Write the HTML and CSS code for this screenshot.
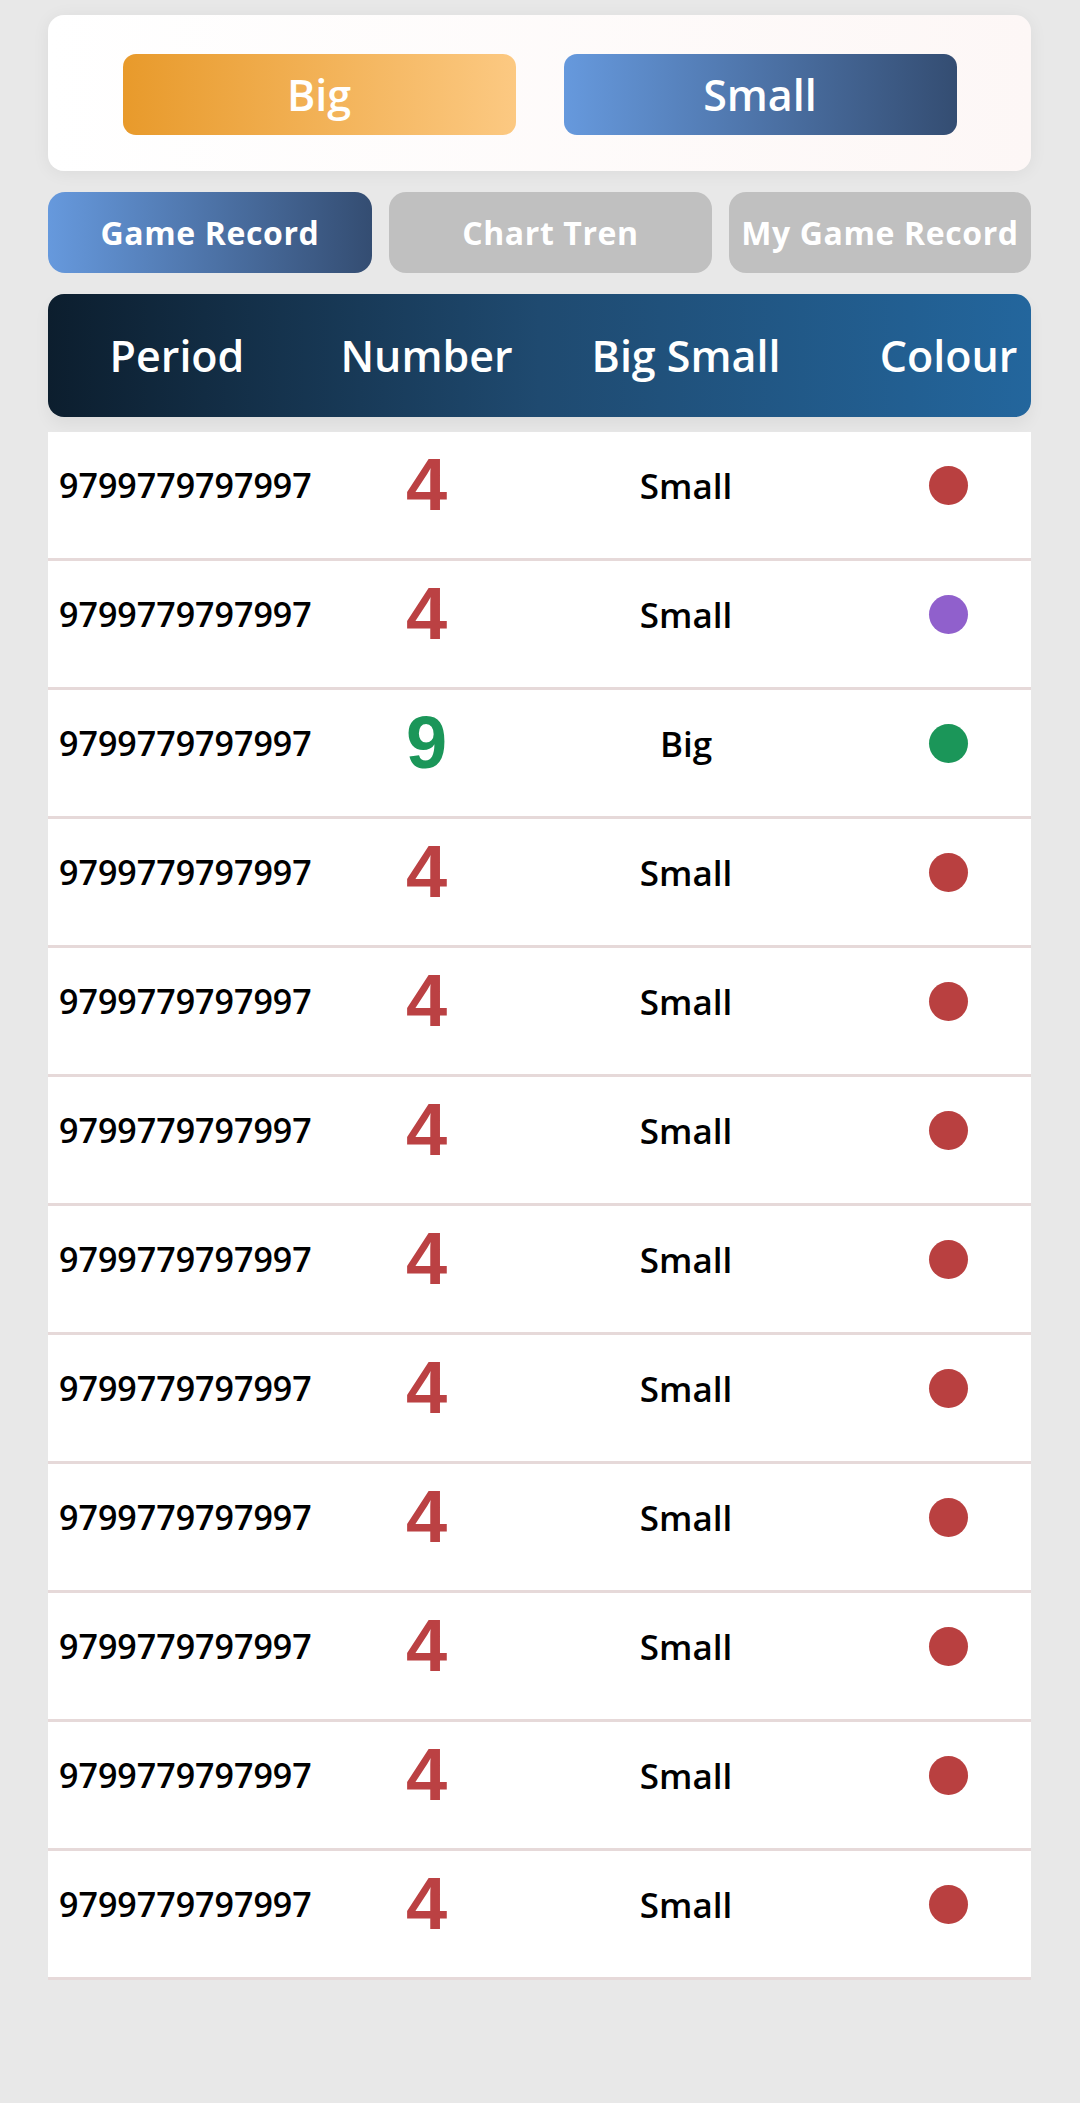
FILE: index.html
```html
<!DOCTYPE html>
<html lang="en">
<head>
<meta charset="utf-8">
<title>Game Record</title>
<link rel="stylesheet" href="styles.css">
</head>
<body>
<div class="page">
  <section class="choice-card">
    <button class="choice big">Big</button>
    <button class="choice small">Small</button>
  </section>

  <nav class="tabs">
    <div class="tab active">Game Record</div>
    <div class="tab">Chart Tren</div>
    <div class="tab">My Game Record</div>
  </nav>

  <div class="table-head">
    <div class="th th-period">Period</div>
    <div class="th">Number</div>
    <div class="th">Big Small</div>
    <div class="th th-colour">Colour</div>
  </div>

  <div class="rows">
    <div class="row"><div class="period">9799779797997</div><div class="num red">4</div><div class="size">Small</div><div class="col-dot"><span class="dot dot-red"></span></div></div>
    <div class="row"><div class="period">9799779797997</div><div class="num red">4</div><div class="size">Small</div><div class="col-dot"><span class="dot dot-purple"></span></div></div>
    <div class="row"><div class="period">9799779797997</div><div class="num green">9</div><div class="size">Big</div><div class="col-dot"><span class="dot dot-green"></span></div></div>
    <div class="row"><div class="period">9799779797997</div><div class="num red">4</div><div class="size">Small</div><div class="col-dot"><span class="dot dot-red"></span></div></div>
    <div class="row"><div class="period">9799779797997</div><div class="num red">4</div><div class="size">Small</div><div class="col-dot"><span class="dot dot-red"></span></div></div>
    <div class="row"><div class="period">9799779797997</div><div class="num red">4</div><div class="size">Small</div><div class="col-dot"><span class="dot dot-red"></span></div></div>
    <div class="row"><div class="period">9799779797997</div><div class="num red">4</div><div class="size">Small</div><div class="col-dot"><span class="dot dot-red"></span></div></div>
    <div class="row"><div class="period">9799779797997</div><div class="num red">4</div><div class="size">Small</div><div class="col-dot"><span class="dot dot-red"></span></div></div>
    <div class="row"><div class="period">9799779797997</div><div class="num red">4</div><div class="size">Small</div><div class="col-dot"><span class="dot dot-red"></span></div></div>
    <div class="row"><div class="period">9799779797997</div><div class="num red">4</div><div class="size">Small</div><div class="col-dot"><span class="dot dot-red"></span></div></div>
    <div class="row"><div class="period">9799779797997</div><div class="num red">4</div><div class="size">Small</div><div class="col-dot"><span class="dot dot-red"></span></div></div>
    <div class="row"><div class="period">9799779797997</div><div class="num red">4</div><div class="size">Small</div><div class="col-dot"><span class="dot dot-red"></span></div></div>
  </div>
</div>
</body>
</html>
```

FILE: styles.css
```css
* { box-sizing: border-box; }

html, body {
  margin: 0;
  padding: 0;
  background: #e8e8e8;
}

body {
  font-family: "Open Sans", "DejaVu Sans", sans-serif;
  font-weight: 600;
  color: #000;
}

.page {
  width: 983px;
  margin-left: 48px;
  padding-top: 15px;
  padding-bottom: 60px;
}

.choice-card {
  height: 156px;
  border-radius: 16px;
  background: linear-gradient(to right, #ffffff, #fdf7f6);
  box-shadow: 0 2px 18px rgba(0, 0, 0, 0.06);
  display: flex;
  justify-content: center;
  gap: 48px;
  padding-top: 39px;
}

.choice {
  width: 393px;
  height: 81px;
  border: none;
  border-radius: 13px;
  color: #fff;
  font-family: "Open Sans", "DejaVu Sans", sans-serif;
  font-weight: 600;
  font-size: 43px;
  line-height: 81px;
  padding: 0;
}

.choice.big { background: linear-gradient(to right, #e89a2b, #fcc982); }
.choice.small { background: linear-gradient(to right, #6699dd, #344d72); }

.tabs {
  margin-top: 21px;
  display: grid;
  grid-template-columns: 324px 323px 1fr;
  gap: 17px;
}

.tab {
  height: 81px;
  border-radius: 17px;
  background: #c0c0c0;
  color: #fff;
  font-size: 32px;
  font-weight: 700;
  letter-spacing: 0.6px;
  line-height: 81px;
  text-align: center;
  white-space: nowrap;
}

.tab.active { background: linear-gradient(to right, #6699dd, #344d72); }

.table-head {
  margin-top: 21px;
  height: 123px;
  border-radius: 16px;
  background: linear-gradient(to right, #0c1e2e, #1f4a70 50%, #23669d);
  box-shadow: 0 8px 16px rgba(0, 0, 0, 0.05);
  display: grid;
  grid-template-columns: 253px 251px 268px 1fr;
  align-items: center;
  color: #fff;
  font-size: 43px;
}

.th { text-align: center; white-space: nowrap; }
.th-period { padding-left: 5px; }
.th-colour { padding-left: 46px; }

.rows { margin-top: 15px; }

.row {
  height: 129px;
  background: #fff;
  border-bottom: 3px solid #e6d9d9;
  display: grid;
  grid-template-columns: 253px 251px 268px 1fr;
  align-items: center;
  padding-bottom: 20px;
}

.period {
  padding-left: 11px;
  font-size: 34px;
  white-space: nowrap;
}

.num {
  text-align: center;
  font-family: "Liberation Sans", Arial, sans-serif;
  font-weight: 700;
  font-size: 74px;
  line-height: 1;
}

.num.red { color: #bb4143; }
.num.green { color: #1b9659; }

.size {
  text-align: center;
  font-size: 35px;
}

.col-dot {
  padding-left: 46px;
  display: flex;
  justify-content: center;
}

.dot {
  width: 39px;
  height: 39px;
  border-radius: 50%;
  display: block;
}

.dot-red { background: #b94040; }
.dot-purple { background: #9060cc; }
.dot-green { background: #1b9659; }
```
